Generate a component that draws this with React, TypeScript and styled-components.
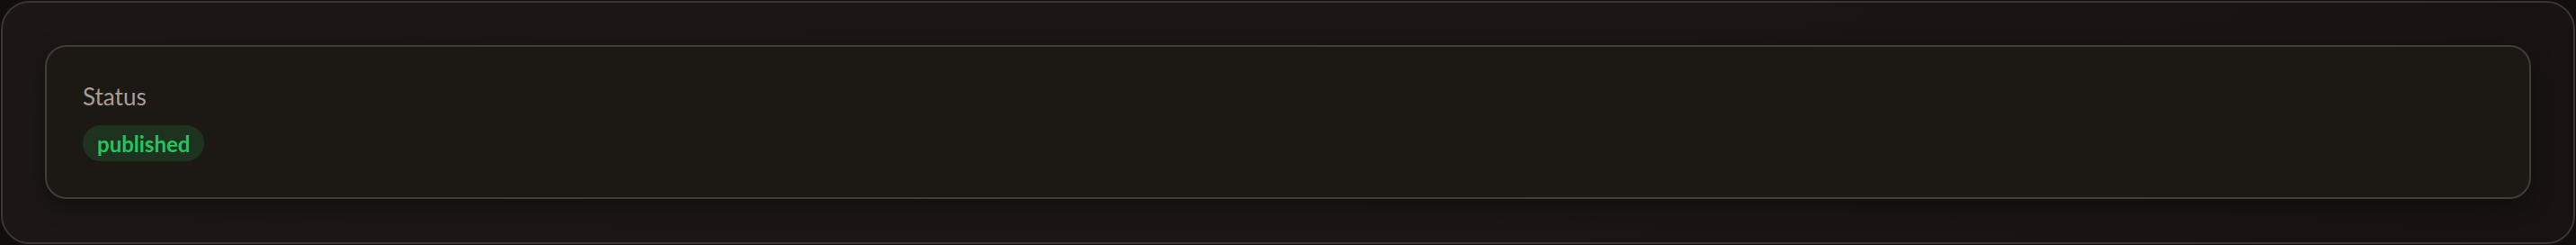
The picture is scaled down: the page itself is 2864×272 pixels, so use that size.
import React from "react";
import styled, { createGlobalStyle } from "styled-components";

const Global = createGlobalStyle`
  html, body { margin: 0; padding: 0; background: #120e0c; }
  body { font-family: "Lato", "Noto Sans", sans-serif; }
  #root { padding: 1px; box-sizing: border-box; width: 2864px; height: 272px; }
`;

const Panel = styled.div`
  box-sizing: border-box;
  width: 2862px;
  height: 270px;
  border: 2px solid #3b3431;
  border-radius: 32px;
  background: linear-gradient(135deg, #1c1714 0%, #1b1613 60%, #181310 100%);
  padding: 47px 47px;
`;

const Card = styled.div`
  box-sizing: border-box;
  height: 171px;
  border: 2px solid #433b38;
  border-radius: 24px;
  background: #1c1814;
  box-shadow: 0 8px 24px rgba(0, 0, 0, 0.35);
  padding: 37px 40px 40px;
  display: flex;
  flex-direction: column;
  align-items: flex-start;
  gap: 14px;
`;

const Label = styled.div`
  font-size: 26px;
  line-height: 36px;
  color: #a79d97;
  font-weight: 400;
`;

const Badge = styled.span<{ $tone: "success" }>`
  display: inline-flex;
  align-items: center;
  height: 40px;
  padding: 0 16px;
  border-radius: 999px;
  background: #1e3220;
  color: #22c55e;
  font-size: 24px;
  font-weight: 700;
`;

export default function App() {
  return (
    <>
      <Global />
      <Panel>
        <Card>
          <Label>Status</Label>
          <Badge $tone="success">published</Badge>
        </Card>
      </Panel>
    </>
  );
}
